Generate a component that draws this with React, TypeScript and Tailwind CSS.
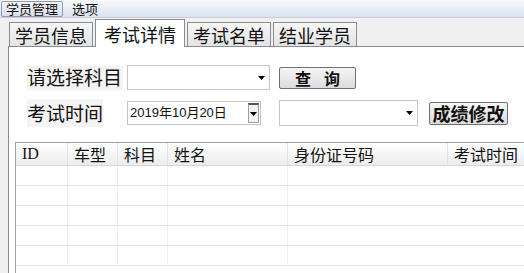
import * as React from "react"

const FONT = "font-['Noto_Sans_CJK_SC','Liberation_Sans',sans-serif]"

const COLS = [
  { label: "ID", w: 52 },
  { label: "车型", w: 50 },
  { label: "科目", w: 50 },
  { label: "姓名", w: 120 },
  { label: "身份证号码", w: 160 },
  { label: "考试时间", w: 120 },
]

const TABS = ["学员信息", "考试详情", "考试名单", "结业学员"]

function Arrow() {
  return (
    <svg width="7" height="4" viewBox="0 0 7 4">
      <path d="M0 0h7L3.5 4z" fill="#000" />
    </svg>
  )
}

function Combo({ w, h }: { w: number; h: number }) {
  return (
    <div
      className="flex items-center justify-end border border-[#c5c5c5] bg-white pr-[4px]"
      style={{ width: w, height: h }}
    >
      <Arrow />
    </div>
  )
}

function Tab({ label, active }: { label: string; active?: boolean }) {
  return active ? (
    <div className="relative z-10 -mb-px mr-[2px] flex h-[28px] items-center border border-b-0 border-[#898c95] bg-white px-[8px] text-[18px] leading-none text-[#111]">
      {label}
    </div>
  ) : (
    <div className="mr-[2px] flex h-[24px] items-center border border-b-0 border-[#898c95] bg-gradient-to-b from-[#f7f7f7] to-[#e3e3e3] px-[5px] text-[18px] leading-none text-[#111]">
      {label}
    </div>
  )
}

export default function App() {
  return (
    <div className={`flex h-[273px] w-[524px] flex-col overflow-hidden bg-[#f0f0f0] ${FONT}`}>
      {/* menu bar */}
      <div className="flex h-[18px] items-center gap-[9px] border-b border-[#c8cdd8] bg-gradient-to-b from-[#f6f8fc] to-[#dbe2f1] text-[13px] leading-none text-[#111]">
        <div className="ml-[1px] flex h-[16px] items-center rounded-[2px] border border-[#8f99ad] bg-gradient-to-b from-[#f2f4f8] to-[#d9dfeb] px-[4px]">
          学员管理
        </div>
        <span>选项</span>
      </div>

      {/* tabs */}
      <div className="flex h-[28px] items-end pl-[9px]">
        {TABS.map((t, i) => (
          <Tab key={t} label={t} active={i === 1} />
        ))}
      </div>

      {/* panel */}
      <div className="ml-[8px] flex flex-1 flex-col border-l border-t border-[#898c95] bg-white">
        <div className="flex flex-col gap-[10px] pl-[18px] pt-[18px]">
          <div className="flex items-center">
            <div className="flex h-[24px] w-[96px] items-center bg-[#f4f4f4] text-[19px] text-[#111]">
              请选择科目
            </div>
            <div className="ml-[4px]">
              <Combo w={143} h={25} />
            </div>
            <button className="ml-[9px] flex h-[22px] w-[77px] items-center justify-center gap-[13px] rounded-[2px] border border-[#707070] bg-gradient-to-b from-[#f5f5f5] to-[#dcdcdc] text-[16px] font-bold leading-none text-[#111]">
              <span>查</span>
              <span>询</span>
            </button>
          </div>
          <div className="flex items-center">
            <div className="flex h-[24px] w-[96px] items-center text-[19px] text-[#111]">
              <span className="bg-[#f4f4f4]">考试时间</span>
            </div>
            <div className="ml-[4px] flex h-[24px] w-[134px] items-center justify-between border border-[#c5c5c5] bg-white pl-[2px] pr-[1px] font-['Liberation_Sans','Noto_Sans_CJK_SC',sans-serif] text-[13px] text-[#111]">
              <span>2019年10月20日</span>
              <div className="flex h-[20px] w-[11px] items-center justify-center border border-[#a0a0a0] border-t-2 border-t-[#555] bg-[#f2f2f2]">
                <Arrow />
              </div>
            </div>
            <div className="ml-[18px]">
              <Combo w={139} h={26} />
            </div>
            <button className="ml-[11px] flex h-[23px] w-[79px] items-center justify-center rounded-[2px] border border-[#707070] bg-gradient-to-b from-[#f5f5f5] to-[#dcdcdc] text-[18px] font-bold leading-none text-[#111]">
              成绩修改
            </button>
          </div>
        </div>

        {/* grid */}
        <div className="ml-[6px] mt-[16px] flex-1 border-l border-t border-[#a0a0a0] bg-white">
          <div className="flex h-[23px] border-b border-[#d5d5d5] bg-gradient-to-b from-white to-[#ededed]">
            {COLS.map((c, i) => (
              <div
                key={c.label}
                className={`flex shrink-0 items-center pl-[6px] text-[16px] leading-none text-[#111] ${i === 0 ? "font-['Liberation_Serif',serif]" : ""} ${i < COLS.length - 1 ? "border-r border-[#e2e2e2]" : ""}`}
                style={{ width: c.w }}
              >
                {c.label}
              </div>
            ))}
          </div>
          {[0, 1, 2, 3, 4].map((r) => (
            <div key={r} className="flex h-[20px] border-b border-[#e6e6e6]">
              {COLS.map((c, i) => (
                <div
                  key={c.label}
                  className={`shrink-0 ${i < COLS.length - 2 ? "border-r border-[#f0f0f0]" : ""}`}
                  style={{ width: c.w }}
                />
              ))}
            </div>
          ))}
        </div>
      </div>
    </div>
  )
}
